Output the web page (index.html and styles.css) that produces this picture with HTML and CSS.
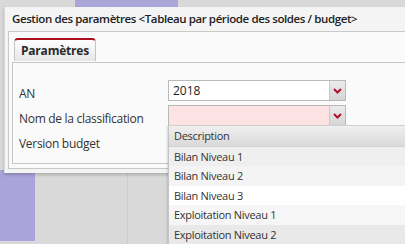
FILE: index.html
```html
<!DOCTYPE html>
<html lang="fr">
<head>
    <meta charset="UTF-8">
    <title>Gestion des paramètres</title>
    <link rel="stylesheet" href="styles.css">
</head>
<body>
    <div class="desk">
        <div class="desk-tab"></div>
        <div class="desk-side"></div>
        <div class="desk-line"></div>
    </div>

    <div class="dialog">
        <div class="dialog-title">Gestion des paramètres &lt;Tableau par période des soldes / budget&gt;</div>
        <div class="tabs">
            <div class="tab-strip">
                <div class="tab">Paramètres</div>
            </div>
            <div class="panel">
                <div class="form">
                    <div class="label">AN</div>
                    <div class="combo">
                        <div class="combo-input">2018</div>
                        <div class="combo-btn"><svg width="9" height="6" viewBox="0 0 9 6"><path d="M1 1 L4.5 4.5 L8 1" fill="none" stroke="#b3122a" stroke-width="2"/></svg></div>
                    </div>
                    <div class="label">Nom de la classification</div>
                    <div class="combo combo-required">
                        <div class="combo-input"></div>
                        <div class="combo-btn"><svg width="9" height="6" viewBox="0 0 9 6"><path d="M1 1 L4.5 4.5 L8 1" fill="none" stroke="#b3122a" stroke-width="2"/></svg></div>
                    </div>
                    <div class="label">Version budget</div>
                    <div class="combo">
                        <div class="combo-input"></div>
                        <div class="combo-btn"></div>
                    </div>
                </div>
            </div>
        </div>
    </div>

    <div class="dropdown">
        <div class="dropdown-head">Description</div>
        <div class="dropdown-row row-1">Bilan Niveau 1</div>
        <div class="dropdown-row row-2">Bilan Niveau 2</div>
        <div class="dropdown-row row-3">Bilan Niveau 3</div>
        <div class="dropdown-row row-4">Exploitation Niveau 1</div>
        <div class="dropdown-row row-5">Exploitation Niveau 2</div>
    </div>
</body>
</html>
```

FILE: styles.css
```css
body {
    margin: 0;
    width: 405px;
    height: 244px;
    overflow: hidden;
    position: relative;
    background-color: #d9d9d9;
    font-family: 'Open Sans', 'Noto Sans', sans-serif;
    color: #333;
}

.desk-tab {
    position: absolute;
    left: 75px;
    top: 0;
    width: 103px;
    height: 8px;
    background-color: #aaa6da;
}

.desk-side {
    position: absolute;
    left: 0;
    top: 170px;
    width: 35px;
    height: 71px;
    background-color: #a9a5db;
}

.desk-line {
    position: absolute;
    left: 127px;
    top: 170px;
    width: 1px;
    height: 74px;
    background-color: #cdcdcd;
}

.dialog {
    position: absolute;
    left: 4px;
    top: 7px;
    width: 401px;
    height: 166px;
    background-color: #f4f4f4;
    border-left: 1px solid #dcdcdc;
    box-shadow: 0 2px 3px rgba(0, 0, 0, 0.2);
}

.dialog-title {
    height: 24px;
    line-height: 24px;
    padding-left: 7px;
    font-size: 11.5px;
    letter-spacing: -0.4px;
    font-weight: 600;
    color: #222;
    white-space: nowrap;
}

.tabs {
    margin-left: 3px;
    height: 136px;
    border: 1px solid #c9c9c9;
    border-right: none;
    background-color: #fafafa;
}

.tab-strip {
    padding: 6px 0 0 5px;
    height: 24px;
}

.tab {
    width: 80px;
    height: 21px;
    line-height: 21px;
    text-align: center;
    font-size: 12px;
    letter-spacing: -0.2px;
    font-weight: 700;
    color: #2a2a2a;
    border: 1px solid #c4c4c4;
    border-top: 2px solid #a8101c;
    border-bottom: none;
    border-radius: 4px 4px 0 0;
    background: linear-gradient(#ffffff, #e6e6e6);
}

.panel {
    margin-left: 3px;
    height: 100px;
    border: 1px solid #c6c6c6;
    border-right: none;
    background-color: #fafafa;
}

.form {
    display: grid;
    grid-template-columns: 149px 178px;
    grid-auto-rows: 25px;
    padding: 17px 0 0 6px;
}

.label {
    font-size: 12px;
    letter-spacing: -0.3px;
    line-height: 25px;
    padding-top: 1px;
    color: #333;
    white-space: nowrap;
}

.combo {
    display: flex;
    height: 19px;
    border: 1px solid #b9b9b9;
}

.combo-input {
    flex: 1;
    background-color: #fff;
    font-size: 12px;
    line-height: 19px;
    padding-left: 4px;
    color: #222;
}

.combo-required .combo-input {
    background-color: #fde3e3;
}

.combo-btn {
    width: 15px;
    display: flex;
    align-items: center;
    justify-content: center;
    border-left: 1px solid #c9c9c9;
    background: linear-gradient(#ececec, #d5d5d5);
}

.dropdown {
    position: absolute;
    left: 168px;
    top: 125px;
    width: 237px;
    background-color: #fff;
    border-left: 1px solid #c4c4c4;
    box-shadow: -1px 1px 2px rgba(0, 0, 0, 0.15);
    font-size: 11px;
    letter-spacing: -0.3px;
    color: #333;
}

.dropdown-head {
    height: 20px;
    line-height: 20px;
    padding-left: 5px;
    background: linear-gradient(#f0f0f0, #d9d9d9);
    border-top: 1px solid #d0d0d0;
    border-bottom: 1px solid #d2d2d2;
}

.dropdown-row {
    height: 19.4px;
    line-height: 19.4px;
    padding-left: 5px;
}

.row-1 { background-color: #efefef; }
.row-2 { background-color: #f4f4f4; }
.row-3 { background-color: #ffffff; }
.row-4 { background-color: #f6f6f6; }
.row-5 { background-color: #e9e9e9; }
```
